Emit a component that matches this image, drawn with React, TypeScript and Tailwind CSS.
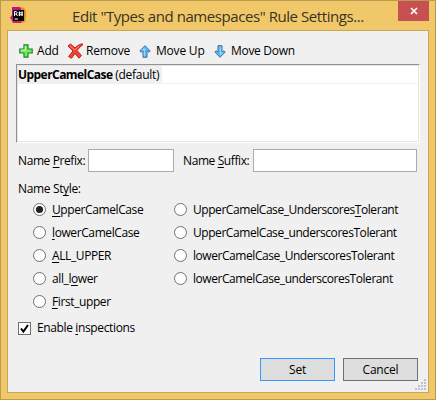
import type { ReactNode } from "react";

function Key({ children }: { children: ReactNode }) {
  return <span className="underline decoration-1 underline-offset-2 [text-decoration-skip-ink:none]">{children}</span>;
}

function AppIcon() {
  return (
    <svg className="block h-[18px] w-[18px]" viewBox="0 0 18 18">
      <path d="M2 0H10L12 3 4 5 4 12 12 13 11 16 3 16 2 12 0 11 2 8Z" fill="#c4108a" />
      <path d="M11 0 14 1 16 4 16 8 15 15 11 16Z" fill="#e98a1c" />
      <path d="M0 10 8 12 12 14 10 16 3 16Z" fill="#d91a72" />
      <rect x="3" y="3" width="11" height="11" fill="#050505" />
      <path d="M4.5 9V4.5H6.3Q7.6 5.5 6.5 7H4.5M6.3 7 7.5 9M9.5 4.5V9M12 4.5V9M8.5 5.8H13M8.5 7.8H13" fill="none" stroke="#fff" strokeWidth="1" />
      <path d="M4.5 12H8" stroke="#fff" />
    </svg>
  );
}

function AddIcon() {
  return (
    <svg className="h-[14px] w-[14px]" viewBox="0 0 14 14">
      <path d="M5 .8h4V5h4.2v4H9v4.2H5V9H.8V5H5Z" fill="#7bea62" stroke="#168527" strokeWidth="1.2" />
      <path d="M6.2 2v4.2H2" fill="none" stroke="#cbffb7" />
    </svg>
  );
}

function RemoveIcon() {
  return (
    <svg className="h-[16px] w-[17px]" viewBox="0 0 17 16">
      <path d="M1 3 3.5 1 8 5Q11 1.8 15 .7L16 1.5Q12.5 4 10 7.5L14.5 12.5 12 15.2 8 10.5 4.5 15.3 1.5 13.5 6 8Z" fill="#ef4238" stroke="#c4201e" strokeLinejoin="round" />
      <path d="m3 3 5 4 4-4" fill="none" stroke="#ff8b78" />
    </svg>
  );
}

function ArrowIcon({ down = false }: { down?: boolean }) {
  return (
    <svg className={down ? "h-[13px] w-3 rotate-180" : "h-[13px] w-3"} viewBox="0 0 12 13">
      <path d="M6 .7 11.2 6 10 7.2 8 5.8v6.5H4V5.8L2 7.2.8 6Z" fill="#5cb9f8" stroke="#416f9d" strokeLinejoin="round" />
      <path d="M5.3 11V3.5L3 5.5" fill="none" stroke="#a6ddff" />
    </svg>
  );
}

function Radio({ checked = false, children }: { checked?: boolean; children: ReactNode }) {
  return (
    <label className="flex h-[23px] items-center">
      <svg className="mr-[6px] h-[13px] w-[13px] shrink-0" viewBox="0 0 13 13">
        <circle cx="6.5" cy="6.5" r="6" fill="white" stroke="#707070" />
        {checked && <circle cx="6.5" cy="6.5" r="3.6" fill="#222" />}
      </svg>
      <span>{children}</span>
    </label>
  );
}

export default function App() {
  return (
    <div className="flex h-[400px] w-[436px] flex-col border border-[#b99a50] bg-[#f0c869] px-[6px] font-['Open_Sans',sans-serif] text-[12px] leading-[16px] tracking-[-0.2px] whitespace-nowrap text-black">
      <header className="flex h-[29px] shrink-0">
        <div className="ml-[3px] pt-[6px]"><AppIcon /></div>
        <h1 className="ml-[44px] w-[319px] pt-[5px] text-[15px] leading-[20px] tracking-[-0.43px] text-[#3a3322]">Edit "Types and namespaces" Rule Settings...</h1>
        <button className="ml-[7px] flex h-[20px] w-[31px] shrink-0 items-center justify-center bg-[#c75050]">
          <svg className="h-2 w-2" viewBox="0 0 8 8"><path d="m1 1 6 6M7 1 1 7" stroke="white" strokeWidth="1.7" /></svg>
        </button>
      </header>
      <main className="h-[363px] w-[422px] shrink-0 border border-[#c9a657] bg-[#f0f0f0]">
        <div className="flex h-[33px] items-center pt-[7px] pl-[11px]">
          <div className="flex w-[48px] items-center gap-1"><AddIcon /><span>Add</span></div>
          <div className="flex w-[72px] items-center gap-[2px]"><RemoveIcon /><span>Remove</span></div>
          <div className="flex w-[75px] items-center gap-[5px]"><ArrowIcon /><span>Move Up</span></div>
          <div className="flex items-center gap-[5px] tracking-[-0.3px]"><ArrowIcon down /><span>Move Down</span></div>
        </div>
        <div className="ml-2 h-[79px] w-[404px] border-t border-r border-b border-l border-t-[#929292] border-r-white border-b-white border-l-[#929292]">
          <div className="h-full border border-[#e3e3e3] bg-white">
            <div className="h-[18px] border-b border-[#f0f0f0]">
              <div className="h-[17px] w-[144px] bg-[#f0f0f0] leading-[17px] tracking-[-0.3px]"><b className="tracking-[-0.55px]">UpperCamelCase</b> (default)</div>
            </div>
          </div>
        </div>
        <div className="mt-[6px] ml-[10px] flex h-[23px] items-center tracking-[-0.4px]">
          <label className="w-[70px]">Name <Key>P</Key>refix:</label>
          <input className="h-[23px] w-[86px] border border-[#ababab] bg-white" />
          <label className="ml-[9px] w-[70px]">Name <Key>S</Key>uffix:</label>
          <input className="h-[23px] w-[164px] border border-[#ababab] bg-white" />
        </div>
        <div className="mt-[9px] ml-[10px] h-[16px] tracking-[-0.35px]">Name St<Key>y</Key>le:</div>
        <div className="mt-[1px] ml-[25px] flex">
          <div className="w-[141px] tracking-[-0.4px]">
            <Radio checked><Key>U</Key>pperCamelCase</Radio>
            <Radio><Key>l</Key>owerCamelCase</Radio>
            <Radio><Key>A</Key>LL_UPPER</Radio>
            <Radio>all_l<Key>o</Key>wer</Radio>
            <Radio><Key>F</Key>irst_upper</Radio>
          </div>
          <div className="tracking-[-0.44px]">
            <Radio>UpperCamelCase_Underscores<Key>T</Key>olerant</Radio>
            <Radio>UpperCamelCase_underscoresTolerant</Radio>
            <Radio>lowerCamelCase_UnderscoresTolerant</Radio>
            <Radio>lowerCamelCase_underscoresTolerant</Radio>
          </div>
        </div>
        <label className="mt-[7px] ml-[10px] flex h-[16px] items-center tracking-[-0.37px]">
          <svg className="mr-[6px] h-[13px] w-[13px]" viewBox="0 0 13 13">
            <rect x=".5" y=".5" width="12" height="12" fill="white" stroke="#707070" />
            <path d="m3 6.5 2.4 3L10 3" fill="none" stroke="black" strokeWidth="2" />
          </svg>
          <span>Enable <Key>i</Key>nspections</span>
        </label>
        <div className="mt-[22px] mr-[10px] flex justify-end gap-2">
          <button className="h-[23px] w-[75px] border border-[#3399ff] bg-[#dddddd] leading-[21px]">Set</button>
          <button className="h-[23px] w-[75px] border border-[#707070] bg-[#dddddd] leading-[21px]">Cancel</button>
        </div>
        <svg className="-mt-[2px] ml-auto mr-[2px] h-[12px] w-[12px]" viewBox="0 0 12 12" fill="#bcc3d6">
          <path d="M10 0h2v2h-2zM7 3h2v2H7zM10 3h2v2h-2zM4 6h2v2H4zM7 6h2v2H7zM10 6h2v2h-2zM1 9h2v2H1zM4 9h2v2H4zM7 9h2v2H7zM10 9h2v2h-2z" />
        </svg>
      </main>
    </div>
  );
}
